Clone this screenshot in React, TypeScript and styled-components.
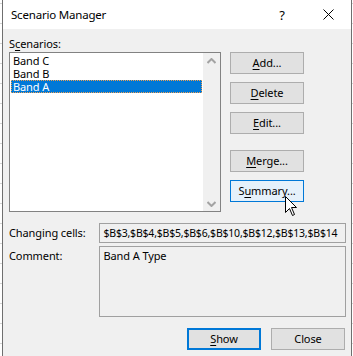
import React from 'react';
import styled, { createGlobalStyle } from 'styled-components';

const GlobalStyle = createGlobalStyle`
  html, body { margin: 0; padding: 0; }
  body {
    width: 353px;
    height: 356px;
    overflow: hidden;
    background: #fff repeating-linear-gradient(to bottom, transparent 0 3px, #d4d4d4 3px 4px, transparent 4px 20px);
    font-family: "Noto Sans", "Open Sans", sans-serif;
    font-size: 11px;
    letter-spacing: -0.1px;
    color: #000;
  }
`;

const Dialog = styled.div`
  position: relative;
  margin-left: 2px;
  width: 350px;
  height: 356px;
  box-sizing: border-box;
  border-left: 1px solid #6f6f6f;
  border-right: 1px solid #6f6f6f;
  background: #f0f0f0;
  display: flex;
  flex-direction: column;
`;

const TitleBar = styled.div`
  height: 29px;
  background: #fff;
  display: flex;
  align-items: center;
  padding-left: 8px;
  font-size: 11.5px;
  letter-spacing: -0.2px;
`;

const Title = styled.div`
  flex: 1;
  padding-bottom: 1px;
`;

const HelpGlyph = styled.div`
  width: 46px;
  text-align: center;
  font-size: 13px;
  padding-left: 3px;
`;

const CloseGlyph = styled.div`
  width: 46px;
  display: flex;
  justify-content: center;
`;

const Body = styled.div`
  padding: 7px 5px 0 6px;
  display: flex;
  flex-direction: column;
`;

const Label = styled.div`
  line-height: 15px;
`;

const Key = styled.span`
  text-decoration: underline;
  text-underline-offset: 2px;
`;

const TopRow = styled.div`
  display: flex;
  gap: 9px;
  margin-top: 1px;
`;

const ListBox = styled.div`
  width: 212px;
  height: 160px;
  box-sizing: border-box;
  border: 1px solid #828282;
  background: #fff;
  display: flex;
`;

const ListItems = styled.div`
  flex: 1;
  padding: 1px 1px 0 1px;
`;

const Item = styled.div<{ $selected?: boolean }>`
  height: 13px;
  line-height: 13px;
  padding-left: 2px;
  box-sizing: border-box;
  background: ${p => (p.$selected ? '#0078d7' : 'transparent')};
  color: ${p => (p.$selected ? '#fff' : '#000')};
  outline: ${p => (p.$selected ? '1px dotted #f0a050' : 'none')};
  outline-offset: -1px;
`;

const ScrollTrack = styled.div`
  width: 17px;
  background: #f0f0f0;
  display: flex;
  flex-direction: column;
  justify-content: space-between;
  align-items: center;
  padding: 5px 0 4px;
`;

const ButtonColumn = styled.div`
  display: flex;
  flex-direction: column;
  gap: 8px;
`;

const Spacer = styled.div`
  height: 0;
`;

const Button = styled.div<{ $hover?: boolean; $default?: boolean }>`
  width: 74px;
  height: 22px;
  box-sizing: border-box;
  display: flex;
  align-items: center;
  justify-content: center;
  padding-bottom: 1px;
  background: ${p => (p.$hover ? '#e5f1fb' : '#e1e1e1')};
  border: ${p => (p.$default ? '2px solid #0078d7' : p.$hover ? '1px solid #0078d7' : '1px solid #adadad')};
`;

const FieldRow = styled.div<{ $top: number }>`
  display: flex;
  margin-top: ${p => p.$top}px;
`;

const FieldLabel = styled.div`
  width: 91px;
  line-height: 15px;
  padding-top: 2px;
`;

const Field = styled.div<{ $h: number; $tight?: boolean }>`
  width: 248px;
  height: ${p => p.$h}px;
  box-sizing: border-box;
  border: 1px solid #a0a0a0;
  padding: 2px 3px;
  line-height: 14px;
  white-space: nowrap;
  overflow: hidden;
  font-size: ${p => (p.$tight ? '10.5px' : '11px')};
  letter-spacing: ${p => (p.$tight ? '-0.2px' : '-0.1px')};
`;

const Footer = styled.div`
  display: flex;
  justify-content: flex-end;
  gap: 10px;
  margin-top: 11px;
  padding-right: 1px;
`;

const Cursor = styled.svg`
  position: absolute;
  left: 282px;
  top: 196px;
`;

const Chevron = ({ up }: { up?: boolean }) => (
  <svg width="9" height="6" viewBox="0 0 9 6">
    <path
      d={up ? 'M0.5 5 L4.5 1 L8.5 5' : 'M0.5 1 L4.5 5 L8.5 1'}
      stroke="#a3a3a3"
      strokeWidth="2"
      fill="none"
    />
  </svg>
);

export default function App() {
  return (
    <>
      <GlobalStyle />
      <Dialog>
        <TitleBar>
          <Title>Scenario Manager</Title>
          <HelpGlyph>?</HelpGlyph>
          <CloseGlyph>
            <svg width="11" height="11" viewBox="0 0 11 11">
              <path d="M0.5 0.5 L10.5 10.5 M10.5 0.5 L0.5 10.5" stroke="#000" strokeWidth="1" />
            </svg>
          </CloseGlyph>
        </TitleBar>
        <Body>
          <Label>S<Key>c</Key>enarios:</Label>
          <TopRow>
            <ListBox>
              <ListItems>
                <Item>Band C</Item>
                <Item>Band B</Item>
                <Item $selected>Band A</Item>
              </ListItems>
              <ScrollTrack>
                <Chevron up />
                <Chevron />
              </ScrollTrack>
            </ListBox>
            <ButtonColumn>
              <Button><Key>A</Key>dd...</Button>
              <Button><Key>D</Key>elete</Button>
              <Button><Key>E</Key>dit...</Button>
              <Spacer />
              <Button><Key>M</Key>erge...</Button>
              <Button $hover>S<Key>u</Key>mmary...</Button>
            </ButtonColumn>
          </TopRow>
          <FieldRow $top={11}>
            <FieldLabel>Changing cells:</FieldLabel>
            <Field $h={20} $tight>$B$3,$B$4,$B$5,$B$6,$B$10,$B$12,$B$13,$B$14</Field>
          </FieldRow>
          <FieldRow $top={3}>
            <FieldLabel>Comment:</FieldLabel>
            <Field $h={71}>Band A Type</Field>
          </FieldRow>
          <Footer>
            <Button $default><Key>S</Key>how</Button>
            <Button>Close</Button>
          </Footer>
        </Body>
        <Cursor width="13" height="21" viewBox="0 0 13 21">
          <path
            d="M0.5 0.5 L0.5 16.5 L4.5 12.5 L7.5 19.5 L9.5 18.5 L6.5 11.5 L11.5 11.5 Z"
            fill="#fff"
            stroke="#000"
            strokeWidth="1"
            strokeLinejoin="round"
          />
        </Cursor>
      </Dialog>
    </>
  );
}
